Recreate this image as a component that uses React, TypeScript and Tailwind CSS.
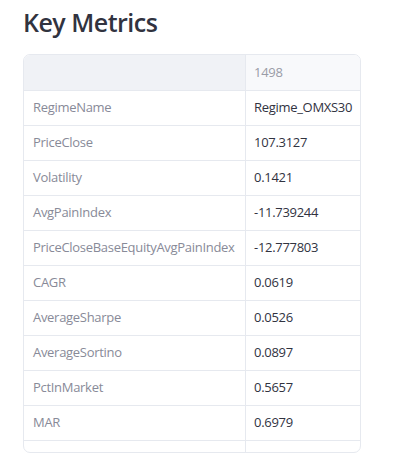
const rows: [string, string][] = [
  ["RegimeName", "Regime_OMXS30"],
  ["PriceClose", "107.3127"],
  ["Volatility", "0.1421"],
  ["AvgPainIndex", "-11.739244"],
  ["PriceCloseBaseEquityAvgPainIndex", "-12.777803"],
  ["CAGR", "0.0619"],
  ["AverageSharpe", "0.0526"],
  ["AverageSortino", "0.0897"],
  ["PctInMarket", "0.5657"],
  ["MAR", "0.6979"],
];

export default function App() {
  return (
    <div className="min-h-screen bg-white pl-[23px] pt-[3px] font-['Open_Sans',sans-serif] text-[#31333f]">
      <h3 className="text-[25px] font-semibold leading-[38px] tracking-[-0.5px]">Key Metrics</h3>
      <div className="mt-[13px] w-[338px] h-[399px] overflow-hidden rounded-[7px] border border-[#e6e9ef] text-[13px] tracking-[-0.3px]">
        <div className="grid grid-cols-[222px_1fr] h-[36px] border-b border-[#e6e9ef]">
          <div className="bg-[#f0f2f6] border-r border-[#e6e9ef]" />
          <div className="bg-[#f8f9fb] flex items-center pl-[8px] text-[#9a9ca7]">1498</div>
        </div>
        {rows.map(([k, v]) => (
          <div key={k} className="grid grid-cols-[222px_1fr] h-[35px] border-b border-[#e6e9ef]">
            <div className="flex items-center pl-[9px] border-r border-[#e6e9ef] text-[#888a98]">{k}</div>
            <div className="flex items-center pl-[8px]">{v}</div>
          </div>
        ))}
        <div className="grid grid-cols-[222px_1fr] h-[20px]">
          <div className="border-r border-[#e6e9ef]" />
          <div />
        </div>
      </div>
    </div>
  );
}
